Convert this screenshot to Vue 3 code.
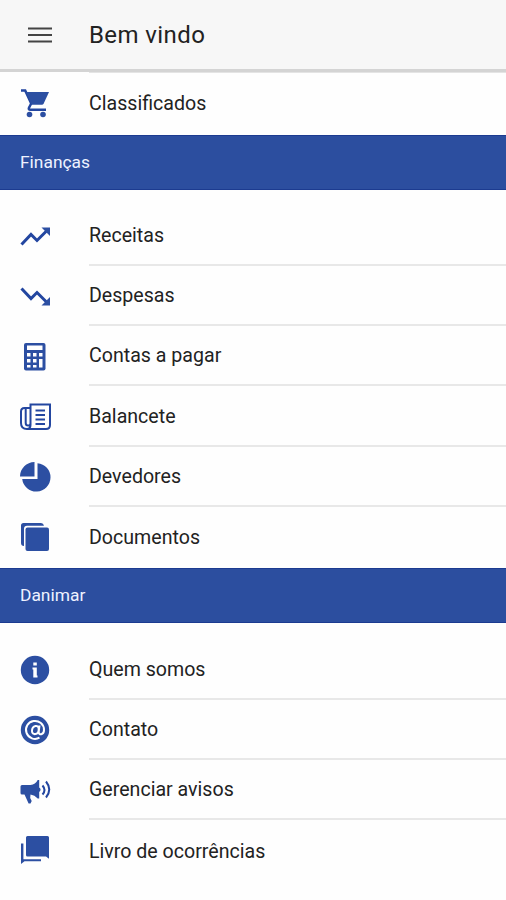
<script setup>
const finances = [
  { icon: 'up', label: 'Receitas' },
  { icon: 'down', label: 'Despesas' },
  { icon: 'calc', label: 'Contas a pagar' },
  { icon: 'news', label: 'Balancete' },
  { icon: 'pie', label: 'Devedores' },
  { icon: 'docs', label: 'Documentos' },
]
const company = [
  { icon: 'info', label: 'Quem somos' },
  { icon: 'at', label: 'Contato' },
  { icon: 'horn', label: 'Gerenciar avisos' },
  { icon: 'chat', label: 'Livro de ocorrências' },
]
const sections = [
  { title: 'Finanças', items: finances },
  { title: 'Danimar', items: company },
]
</script>

<template>
  <div class="screen">
    <header class="toolbar">
      <svg class="menu" viewBox="0 0 24 18"><path d="M0 2.500h24M0 9h24M0 15.500h24" /></svg>
      <h1>Bem vindo</h1>
    </header>
    <div class="row first">
      <svg class="icon" viewBox="0 0 32 32">
        <path class="line" d="M2 3.500h4.200l6 13-2.200 4.300q-.8 2 1.400 2H27" />
        <path d="M7 5h23l-5.400 11.700q-.5 1-1.700 1H12.500z" />
        <circle cx="10.500" cy="27.500" r="2.800" /><circle cx="24" cy="27.500" r="2.800" />
      </svg>
      <span class="label">Classificados</span>
    </div>
    <section v-for="s in sections" :key="s.title">
      <h2>{{ s.title }}</h2>
      <div class="list">
        <div v-for="it in s.items" :key="it.label" class="row">
          <svg class="icon" viewBox="0 0 32 32">
            <template v-if="it.icon === 'up'">
              <path class="stroke" d="M2.500 25.500 12 15.500l6 6L28.500 11" />
              <path d="M22.500 8.500H31V17z" />
            </template>
            <template v-else-if="it.icon === 'down'">
              <path class="stroke" d="M2.500 9.500 12 19.500l6-6L28.500 24" />
              <path d="M22.500 26.500H31V18z" />
            </template>
            <template v-else-if="it.icon === 'calc'">
              <rect x="5" y="3" width="21.500" height="27.500" rx="2" />
              <path class="white" d="M8 5.500h15.500V10H8zM8 13h3.500v3.500H8zM14 13h3.500v3.500H14zM20 13h3.500v3.500H20zM8 19h3.500v3.500H8zM14 19h3.500v3.500H14zM8 25h3.500v2.500H8zM14 25h3.500v2.500H14zM20 19h3.500v8.500H20z" />
            </template>
            <template v-else-if="it.icon === 'news'">
              <path class="thin" d="M11.500 4.500H31V25q0 4-4 4H8q3.500 0 3.500-4zM11.500 8H5.500Q2 8 2 11.500V23q0 6 6 6M6.700 8v15q0 2.500 2.400 2.500t2.400-2.500" />
              <path class="thin" d="M16.500 10.500H26M16.500 15H26M16.500 19.500H26M16.500 24H26" />
            </template>
            <template v-else-if="it.icon === 'pie'">
              <path d="M15.500 2v14.500H1C1 8.500 7.500 2 15.500 2z" />
              <path d="M18.500 3.200A14.200 14.200 0 1 1 3.200 19h15.300z" />
            </template>
            <template v-else-if="it.icon === 'docs'">
              <path d="M4.500 2H22q2.500 0 3 2.700H8Q5 4.700 5 7.700V25Q2 25 2 22V4.500Q2 2 4.500 2z" />
              <rect x="6.500" y="6.500" width="23.500" height="23.500" rx="2" />
            </template>
            <template v-else-if="it.icon === 'info'">
              <circle cx="16" cy="17" r="14.200" />
              <path class="white" d="M14.300 9.500h3.500v3h-3.500zM13.500 14.500h4.300v8h.7v2h-4.200v-8h-.8z" />
            </template>
            <template v-else-if="it.icon === 'at'">
              <circle cx="16" cy="17" r="14.200" />
              <path class="at" d="M20.500 24.700A9 9 0 1 1 25 17c0 5-5.500 5.500-5.300 2l.8-6.500M19.700 16.500c0 5.500-6.700 6.200-6.700 1.500 0-6 7-7 6.700-1.500z" />
            </template>
            <template v-else-if="it.icon === 'horn'">
              <path d="M3 11h8.500q5-.5 7.200-5h1.500v7.500q2.800 2 0 4.500v6.500h-1.500q-3-3.500-7.200-4l-.3 3.500 1.500 3-1.200 2.500h-1.900L5.500 20.500H3q-1.500 0-1.500-1.500v-6.500Q1.500 11 3 11z" />
              <path class="thin" d="M23.500 11.500q4 4.500 0 9M27 7.500q6.500 8 0 16" />
            </template>
            <template v-else>
              <path d="M8.500 2h20Q30 2 30 3.500v21.300L27 22.500H8.500Q7 22.500 7 21V3.500Q7 2 8.500 2z" />
              <path d="M2 9.500h2.400v15.800H22v2H5.500L2 30z" />
            </template>
          </svg>
          <span class="label">{{ it.label }}</span>
        </div>
      </div>
    </section>
  </div>
</template>

<style>
body { background: #fefefe; }
</style>

<style scoped>
.screen {
  height: 900px;
  overflow: hidden;
  background: #fefefe;
  font-family: Roboto, sans-serif;
  color: #222;
}
.toolbar {
  box-sizing: border-box;
  height: 72px;
  padding: 1px 0 0 28px;
  display: flex;
  align-items: center;
  background: #f7f7f7;
  border-bottom: 3px solid #d4d4d4;
}
.menu { width: 24px; height: 18px; margin-right: 37px; }
.menu path { stroke: #444; stroke-width: 2.200; }
h1 { margin: 0; font-size: 24px; font-weight: 400; letter-spacing: 0.400px; line-height: 30px; }
.row {
  height: 60.300px;
  padding-left: 19px;
  display: flex;
  align-items: center;
}
.row.first { height: 62.600px; }
.first .label { border-top: 1px solid #e4e4e4; }
.icon { width: 32px; height: 32px; margin-right: 38px; flex: none; fill: #2c4fa2; }
.list .icon { margin-bottom: 1.400px; }
.label {
  flex: 1;
  align-self: stretch;
  display: flex;
  align-items: center;
  box-sizing: border-box;
  font-size: 19.600px;
}
.list .label { border-bottom: 2px solid #e8e8e8; padding-top: 1px; }
.list .row:last-child { height: 61.400px; }
.list .row:last-child .label { border-bottom: 0; padding-top: 0; }
.list { padding-top: 16px; }
h2 {
  margin: 0;
  height: 55px;
  padding: 0 0 1px 20px;
  display: flex;
  align-items: center;
  box-sizing: border-box;
  background: #2c4e9f;
  border-top: 1px solid #1c3b90;
  border-bottom: 1px solid #1c3b90;
  color: #eef2ff;
  font-size: 17.400px;
  font-weight: 400;
}
.line, .stroke, .thin { fill: none; stroke: #2346a0; }
.line { stroke-width: 2.500; }
.stroke { stroke-width: 3; }
.thin { stroke-width: 2; }
.white { fill: #fff; }
.at { fill: none; stroke: #fff; stroke-width: 2; }
</style>
